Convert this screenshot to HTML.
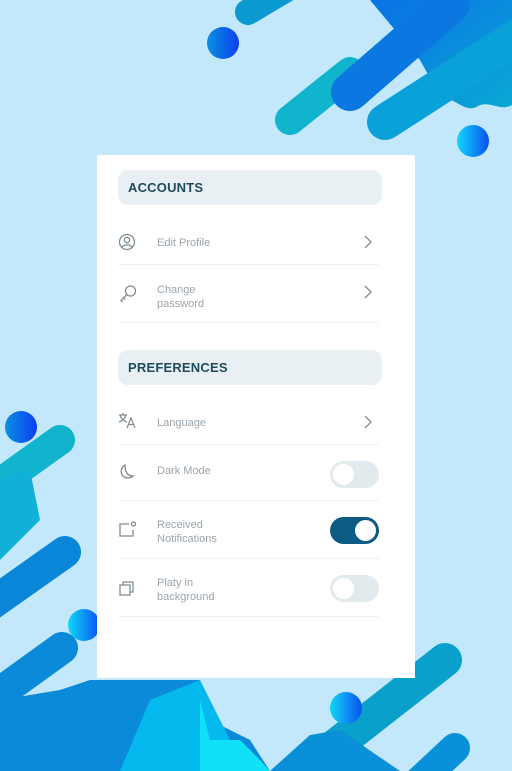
<!DOCTYPE html>
<html><head><meta charset="utf-8"><style>
html,body{margin:0;padding:0}
body{width:512px;height:771px;position:relative;overflow:hidden;background:#c4e8fb;font-family:"Liberation Sans",sans-serif}
svg.bg{position:absolute;left:0;top:0}
.card{position:absolute;left:97px;top:155px;width:318px;height:523px;background:#fff}
.hdr{position:absolute;left:21px;width:264px;height:35px;background:#e9f0f4;border-radius:10px;color:#1f4a5e;font-size:13px;font-weight:bold;line-height:35px;padding-left:10px;box-sizing:border-box;letter-spacing:0.2px}
.row{position:absolute;left:21px;width:261px;border-bottom:1px solid #eef2f4}
.lbl{position:absolute;left:39px;color:#9aa5ad;font-size:11px;line-height:14px}
.ic{position:absolute;left:0}
.chev{position:absolute;right:6px}
.tg{position:absolute;left:212px;width:49px;height:27px;border-radius:14px;background:#e3eaee}
.tg::after{content:"";position:absolute;left:3px;top:3px;width:21px;height:21px;border-radius:50%;background:#fff}
.tg.on{background:#0d5a82}
.tg.on::after{left:25px}
</style></head><body>
<svg class="bg" width="512" height="771" viewBox="0 0 512 771">
<defs>
<linearGradient id="dot" x1="0" x2="1"><stop offset="0" stop-color="#10d8f8"/><stop offset="1" stop-color="#0a50f0"/></linearGradient>
<linearGradient id="dot2" x1="0" x2="1"><stop offset="0" stop-color="#0a90e0"/><stop offset="1" stop-color="#0a40f0"/></linearGradient>
<linearGradient id="tr" x1="0" y1="0" x2="1" y2="1"><stop offset="0" stop-color="#0a70e6"/><stop offset="1" stop-color="#0aa8d4"/></linearGradient>
</defs>
<path d="M370,0 L512,0 L512,105 C500,112 490,100 478,106 C466,114 455,98 440,96 L420,60 Z" fill="url(#tr)"/>
<g stroke-linecap="round" fill="none">
<line x1="248" y1="12" x2="285" y2="-10" stroke="#0a9ad0" stroke-width="26"/>
<line x1="290" y1="120" x2="350" y2="72" stroke="#10b4cc" stroke-width="30"/>
<line x1="385" y1="122" x2="520" y2="35" stroke="#0aa0d8" stroke-width="36"/>
<line x1="350" y1="92" x2="450" y2="5" stroke="#0a78e0" stroke-width="38"/>
<line x1="60" y1="440" x2="-10" y2="490" stroke="#10b4cc" stroke-width="30"/>
<line x1="65" y1="552" x2="-10" y2="605" stroke="#0a86d8" stroke-width="32"/>
<line x1="62" y1="648" x2="-10" y2="700" stroke="#0a8ad8" stroke-width="32"/>
<line x1="445" y1="660" x2="330" y2="750" stroke="#0aa0cc" stroke-width="34"/>
<line x1="455" y1="748" x2="410" y2="790" stroke="#0a90d8" stroke-width="30"/>
</g>
<polygon points="0,480 30,470 40,520 0,560" fill="#10b0d8"/>
<path d="M0,771 L0,700 L60,690 L90,680 L200,680 L210,720 L250,740 L270,771 Z" fill="#0a8ad8"/>
<path d="M120,771 L150,700 L200,680 L230,740 L265,771 Z" fill="#05b8ee"/>
<path d="M200,700 L210,740 L240,740 L260,760 L270,771 L200,771 Z" fill="#10e0f8"/>
<path d="M270,771 L310,735 L340,730 L400,771 Z" fill="#0a90d8"/>
<circle cx="223" cy="43" r="16" fill="url(#dot2)"/>
<circle cx="473" cy="141" r="16" fill="url(#dot)"/>
<circle cx="21" cy="427" r="16" fill="url(#dot2)"/>
<circle cx="84" cy="625" r="16" fill="url(#dot)"/>
<circle cx="346" cy="708" r="16" fill="url(#dot)"/>
</svg>
<div class="card">
<div class="hdr" style="top:15px">ACCOUNTS</div>
<div class="row" style="top:72px;height:37px">
<svg class="ic" style="top:6px" width="18" height="18" viewBox="0 0 18 18" fill="none" stroke="#7f8c94" stroke-width="1.3"><circle cx="9" cy="9" r="7.5"/><circle cx="9" cy="7" r="2.7"/><path d="M4,14.5 C6,11 12,11 14,14.5"/></svg>
<div class="lbl" style="top:9px">Edit Profile</div>
<svg class="chev" style="top:7px" width="10" height="16" viewBox="0 0 10 16" fill="none" stroke="#7f8c94" stroke-width="1.3"><path d="M2,2 L8,8 L2,14"/></svg>
</div>
<div class="row" style="top:120px;height:47px">
<svg class="ic" style="top:9px" width="20" height="20" viewBox="0 0 20 20" fill="none" stroke="#7f8c94" stroke-width="1.3"><circle cx="12.5" cy="7" r="5"/><path d="M9,10.5 L3,16.5 L4.5,18 M5.5,14 L7,15.5"/></svg>
<div class="lbl" style="top:8px">Change<br>password</div>
<svg class="chev" style="top:9px" width="10" height="16" viewBox="0 0 10 16" fill="none" stroke="#7f8c94" stroke-width="1.3"><path d="M2,2 L8,8 L2,14"/></svg>
</div>
<div class="hdr" style="top:195px">PREFERENCES</div>
<div class="row" style="top:252px;height:37px">
<svg class="ic" style="top:5px" width="20" height="18" viewBox="0 0 20 18" fill="none" stroke="#7f8c94" stroke-width="1.2"><path d="M1,3 H9 M5,1 V3 M2,3 C3,7 6,9 9,10 M8,3 C7,7 4,9 1,10 M9,16 L13,6 L17,16 M10.5,12.5 H15.5"/></svg>
<div class="lbl" style="top:9px">Language</div>
<svg class="chev" style="top:7px" width="10" height="16" viewBox="0 0 10 16" fill="none" stroke="#7f8c94" stroke-width="1.3"><path d="M2,2 L8,8 L2,14"/></svg>
</div>
<div class="row" style="top:300px;height:45px">
<svg class="ic" style="top:8px" width="18" height="18" viewBox="0 0 18 18" fill="none" stroke="#7f8c94" stroke-width="1.3"><path d="M7,2 C3,4 2,10 5,13 C8,16 13,15 15,13 C11,13 7,11 7,2 Z"/></svg>
<div class="lbl" style="top:9px">Dark Mode</div>
<div class="tg" style="top:6px"></div>
</div>
<div class="row" style="top:356px;height:47px">
<svg class="ic" style="top:9px" width="20" height="20" viewBox="0 0 20 20" fill="none" stroke="#7f8c94" stroke-width="1.3"><path d="M11,4 H2 V16 H15 V10"/><circle cx="15.5" cy="4" r="2"/></svg>
<div class="lbl" style="top:7px">Received<br>Notifications</div>
<div class="tg on" style="top:6px"></div>
</div>
<div class="row" style="top:414px;height:47px">
<svg class="ic" style="top:11px" width="18" height="18" viewBox="0 0 18 18" fill="none" stroke="#7f8c94" stroke-width="1.3"><rect x="2" y="5" width="10" height="10"/><path d="M5,5 V2 H15 V12 H12"/></svg>
<div class="lbl" style="top:7px">Platy in<br>background</div>
<div class="tg" style="top:6px"></div>
</div>
</div>
</body></html>
